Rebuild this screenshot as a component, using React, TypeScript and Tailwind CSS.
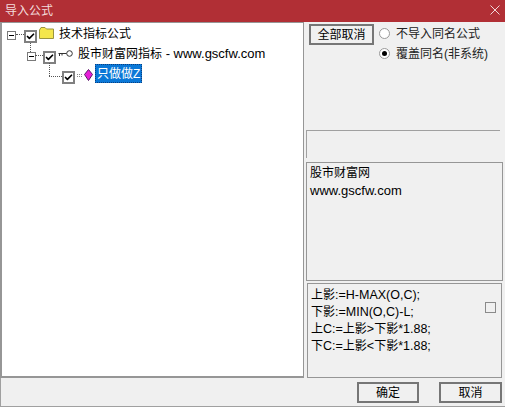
import type { ReactNode } from "react";
import { Check } from "lucide-react";

const font = { fontFamily: '"Liberation Sans", "Noto Sans CJK SC", sans-serif' };

function Cn({ children }: { children: ReactNode }) {
  return <span className="text-[12px]">{children}</span>;
}

function Expander({ className }: { className: string }) {
  return (
    <div className={`flex size-[9px] shrink-0 items-center justify-center border border-[#7a7a7a] bg-white ${className}`}>
      <div className="h-px w-[5px] bg-black" />
    </div>
  );
}

function TreeCheck({ className }: { className: string }) {
  return (
    <div className={`flex size-[13px] shrink-0 items-center justify-center border-2 border-[#808080] bg-white ${className}`}>
      <Check size={11} strokeWidth={4.500} className="text-black" />
    </div>
  );
}

function Folder() {
  return (
    <svg width="15" height="12" viewBox="0 0 15 12" className="mt-[3px] ml-[2px] shrink-0">
      <path d="M0.500 3 L2 0.500 H6 L7.500 2 H14.500 V11.500 H0.500 Z" fill="#f4e64c" stroke="#9a9440" strokeWidth="1" />
    </svg>
  );
}

function KeyIcon() {
  return (
    <svg width="15" height="7" viewBox="0 0 15 7" className="mt-[6px] ml-[2px] shrink-0">
      <circle cx="11.500" cy="3.500" r="2.800" fill="white" stroke="#333" strokeWidth="1" />
      <path d="M8.500 3.500 H0.500 M1.500 3.500 V6 M4 3.500 V5.500" stroke="#333" strokeWidth="1" fill="none" />
    </svg>
  );
}

function Gem() {
  return (
    <svg width="16" height="12" viewBox="0 0 16 12" className="mt-[5px] ml-[2px] shrink-0">
      <path d="M0 5.500 H6 M0 7.500 H6" stroke="#888" strokeWidth="1" strokeDasharray="1 1" />
      <path d="M11.500 0.500 L15.500 5.500 L11.500 11.500 L7.500 5.500 Z" fill="#e81fd8" stroke="#5a1a6a" strokeWidth="1" />
    </svg>
  );
}

export default function App() {
  return (
    <div className="flex h-[407px] w-[505px] flex-col overflow-hidden bg-[#f0f0f0] text-[13px] text-black" style={font}>
      <div className="flex h-[22px] shrink-0 items-center justify-between bg-[#b12f35] pl-[5px] pr-[5px] text-[12px] text-[#f3dcdc]">
        <span>导入公式</span>
        <svg width="10" height="10" viewBox="0 0 10 10" className="mb-[3px]">
          <path d="M0.500 0.500 L9.500 9.500 M9.500 0.500 L0.500 9.500" stroke="#f0d8d8" strokeWidth="1" />
        </svg>
      </div>

      <div className="flex h-[356px] shrink-0">
        <div className="relative h-[356px] w-[304px] shrink-0 border border-b-2 border-l-2 border-[#969696] bg-white pt-px">
          <div className="absolute left-[14px] top-[11px] w-[8px] border-t border-dotted border-[#555]" />
          <div className="absolute left-[28px] top-[20px] h-[9px] border-l border-dotted border-[#555]" />
          <div className="absolute left-[33px] top-[32px] w-[8px] border-t border-dotted border-[#555]" />
          <div className="absolute left-[47px] top-[40px] h-[13px] border-l border-dotted border-[#555]" />
          <div className="absolute left-[47px] top-[53px] w-[13px] border-t border-dotted border-[#555]" />

          <div className="flex h-5 items-start pl-[5px]">
            <Expander className="mt-[7px]" />
            <TreeCheck className="ml-[8px] mt-[6px]" />
            <Folder />
            <span className="ml-[5px] mt-[2px] leading-[16px]">
              <Cn>技术指标公式</Cn>
            </span>
          </div>
          <div className="flex h-5 items-start pl-[25px]">
            <Expander className="mt-[8px]" />
            <TreeCheck className="ml-[7px] mt-[7px]" />
            <KeyIcon />
            <span className="ml-[5px] mt-[2px] leading-[16px]">
              <Cn>股市财富网指标</Cn> - www.gscfw.com
            </span>
          </div>
          <div className="flex h-5 items-start pl-[60px]">
            <TreeCheck className="mt-[7px]" />
            <Gem />
            <span className="ml-[2px] h-[19px] w-[47px] border border-dotted border-[#0a3f80] bg-[#0a78d7] pl-px leading-[17px] text-white">
              <Cn>只做做Z</Cn>
            </span>
          </div>
        </div>

        <div className="flex min-w-0 flex-1 flex-col">
          <div className="flex h-[108px] shrink-0 items-start pl-[5px] pt-[2px]">
            <button className="h-[21px] w-[65px] border-2 border-[#767676] bg-[#f0f0f0] leading-none">
              <Cn>全部取消</Cn>
            </button>
            <div className="ml-[5px] flex flex-col gap-[4px] pt-px">
              <div className="flex h-4 items-center gap-[6px]">
                <div className="size-[11px] rounded-full border border-[#9a9a9a] bg-white" />
                <span className="leading-none text-[#222]">
                  <Cn>不导入同名公式</Cn>
                </span>
              </div>
              <div className="flex h-4 items-center gap-[6px]">
                <div className="flex size-[11px] items-center justify-center rounded-full border border-[#9a9a9a] bg-white">
                  <div className="size-[5px] rounded-full bg-black" />
                </div>
                <span className="leading-none text-[#222]">
                  <Cn>覆盖同名(非系统)</Cn>
                </span>
              </div>
            </div>
          </div>

          <div className="ml-[2px] h-[28px] w-[194px] shrink-0 border-l border-t border-[#a0a0a0]" />

          <div className="ml-[2px] mt-[4px] h-[119px] w-[197px] shrink-0 border border-[#969696] pl-[3px] pt-px leading-[18px]">
            <div>
              <Cn>股市财富网</Cn>
            </div>
            <div>www.gscfw.com</div>
          </div>

          <div className="relative ml-[3px] mt-[2px] h-[95px] w-[195px] shrink-0 border border-[#969696] pl-[3px] pt-[3px] text-[12.5px] leading-[17px]">
            <div>
              <Cn>上影</Cn>:=H-MAX(O,C);
            </div>
            <div>
              <Cn>下影</Cn>:=MIN(O,C)-L;
            </div>
            <div>
              <Cn>上</Cn>C:=<Cn>上影</Cn>&gt;<Cn>下影</Cn>*1.88;
            </div>
            <div>
              <Cn>下</Cn>C:=<Cn>上影</Cn>&lt;<Cn>下影</Cn>*1.88;
            </div>
            <div className="absolute right-[5px] top-[18px] size-[11px] border border-[#8a8a8a]" />
          </div>
        </div>
      </div>

      <div className="flex h-[29px] shrink-0 items-start justify-end gap-5 border-b border-l border-[#a0a0a0] pr-[3px] pt-[4px]">
        <button className="h-[21px] w-[62px] border-2 border-[#767676] leading-none">
          <Cn>确定</Cn>
        </button>
        <button className="h-[21px] w-[63px] border-2 border-[#767676] leading-none">
          <Cn>取消</Cn>
        </button>
      </div>
    </div>
  );
}
